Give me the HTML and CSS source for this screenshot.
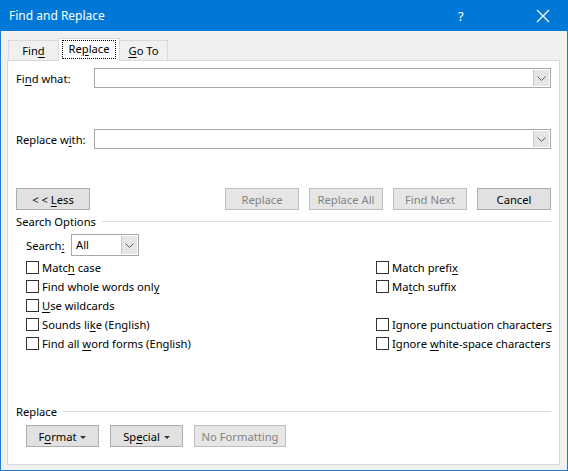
FILE: index.html
```html
<!DOCTYPE html>
<html>
<head>
<meta charset="utf-8">
<link rel="stylesheet" href="styles.css">
</head>
<body>
<div class="window">
  <div class="titlebar">
    <span class="title">Find and Replace</span>
    <span class="help">?</span>
    <span class="close"><svg width="14" height="14" viewBox="0 0 14 14"><path d="M1 1L13 13M13 1L1 13" stroke="#fff" stroke-width="1.2" fill="none"/></svg></span>
  </div>
  <div class="body">
    <div class="tabs">
      <div class="tab t-find"><span>Fin<u>d</u></span></div>
      <div class="tab active"><span class="focus">Re<u>p</u>lace</span></div>
      <div class="tab t-goto"><span><u>G</u>o To</span></div>
    </div>
    <div class="panel">
      <div class="field-row first">
        <label class="flabel">Fi<u>n</u>d what:</label>
        <div class="combo"><span class="drop"><svg width="9" height="5" viewBox="0 0 9 5"><path d="M0.5 0.5L4.5 4.5L8.5 0.5" stroke="#606060" fill="none"/></svg></span></div>
      </div>
      <div class="field-row second">
        <label class="flabel">Replace w<u>i</u>th:</label>
        <div class="combo"><span class="drop"><svg width="9" height="5" viewBox="0 0 9 5"><path d="M0.5 0.5L4.5 4.5L8.5 0.5" stroke="#606060" fill="none"/></svg></span></div>
      </div>
      <div class="btn-row">
        <button class="btn less">&lt; &lt; <u>L</u>ess</button>
        <div class="spacer"></div>
        <button class="btn disabled">Replace</button>
        <button class="btn disabled">Replace All</button>
        <button class="btn disabled">Find Next</button>
        <button class="btn">Cancel</button>
      </div>
      <div class="group-title"><span>Search Options</span><div class="rule"></div></div>
      <div class="search-row">
        <label>Search<u>:</u></label>
        <div class="select"><span class="sel-text">All</span><span class="drop"><svg width="9" height="5" viewBox="0 0 9 5"><path d="M0.5 0.5L4.5 4.5L8.5 0.5" stroke="#606060" fill="none"/></svg></span></div>
      </div>
      <div class="options">
        <div class="opt"><span class="cb"></span><span class="ot">Matc<u>h</u> case</span></div>
        <div class="opt"><span class="cb"></span><span class="ot">Match prefi<u>x</u></span></div>
        <div class="opt"><span class="cb"></span><span class="ot">Find whole words onl<u>y</u></span></div>
        <div class="opt"><span class="cb"></span><span class="ot">Ma<u>t</u>ch suffix</span></div>
        <div class="opt"><span class="cb"></span><span class="ot"><u>U</u>se wildcards</span></div>
        <div class="opt"></div>
        <div class="opt"><span class="cb"></span><span class="ot">Sounds li<u>k</u>e (English)</span></div>
        <div class="opt"><span class="cb"></span><span class="ot">Ignore punctuation character<u>s</u></span></div>
        <div class="opt"><span class="cb"></span><span class="ot">Find all <u>w</u>ord forms (English)</span></div>
        <div class="opt"><span class="cb"></span><span class="ot">Ignore <u>w</u>hite-space characters</span></div>
      </div>
      <div class="group-title replace-title"><span>Replace</span><div class="rule"></div></div>
      <div class="fmt-row">
        <button class="btn fmt">F<u>o</u>rmat <span class="tri"></span></button>
        <button class="btn fmt">Sp<u>e</u>cial <span class="tri"></span></button>
        <button class="btn disabled nofmt">No Formatting</button>
      </div>
    </div>
  </div>
</div>
</body>
</html>
```
FILE: styles.css
```css
* { box-sizing: border-box; }
html, body { margin: 0; padding: 0; }
body {
  width: 568px;
  height: 471px;
  font-family: "Segoe UI", "Noto Sans", "Liberation Sans", sans-serif;
  font-size: 11.2px;
  color: #000;
  overflow: hidden;
  white-space: nowrap;
}
u { text-decoration: underline; text-underline-offset: 2px; }
.window {
  width: 568px;
  height: 471px;
  border: 1px solid #1a7fd4;
  border-top: none;
  display: flex;
  flex-direction: column;
  background: #f0f0f0;
}
.titlebar {
  height: 31px;
  margin: 0 -1px;
  background: #0078d7;
  color: #fff;
  display: flex;
  align-items: center;
  padding-left: 9px;
  font-size: 12px;
}
.title { flex: 1; }
.help { width: 20px; margin-right: 58px; font-size: 13px; }
.close { width: 16px; margin-right: 16px; display: flex; }
.body {
  flex: 1;
  padding: 7px 7px 5px 6px;
  display: flex;
  flex-direction: column;
}
.tabs {
  display: flex;
  height: 22px;
  align-items: flex-end;
  padding-left: 1px;
  position: relative;
  z-index: 1;
}
.tab {
  height: 20px;
  border: 1px solid #d9d9d9;
  border-bottom: none;
  background: #f0f0f0;
  line-height: 19px;
  text-align: center;
  color: #000;
}
.t-find { width: 51px; margin-right: -1px; }
.t-goto { width: 49px; margin-left: -1px; }
.tab.active {
  height: 23px;
  margin-bottom: -1px;
  background: #fff;
  width: 62px;
  padding: 2px 4px 0 4px;
  line-height: 16px;
}
.tab.active .focus {
  display: block;
  outline: 1px dotted #000;
  height: 17px;
}
.panel {
  flex: 1;
  background: #fff;
  border: 1px solid #d9d9d9;
  padding: 0 8px 0 8px;
  display: flex;
  flex-direction: column;
}
.field-row {
  display: flex;
  align-items: center;
  height: 20px;
}
.field-row.first { margin-top: 7px; }
.field-row.second { margin-top: 41px; }
.flabel { width: 78px; }
.combo {
  flex: 1;
  height: 20px;
  border: 1px solid #a8a8a8;
  display: flex;
  justify-content: flex-end;
  padding: 1px;
}
.drop {
  width: 16px;
  background: #e5e5e5;
  border-left: 1px solid #c8c8c8;
  display: flex;
  align-items: center;
  justify-content: center;
}
.btn-row {
  display: flex;
  margin-top: 39px;
  height: 22px;
}
.spacer { flex: 1; }
.btn {
  font: inherit;
  height: 22px;
  width: 74px;
  background: #e1e1e1;
  border: 1px solid #adadad;
  padding: 0;
  margin-left: 10px;
  color: #000;
}
.btn.less { margin-left: 0; }
.btn.disabled {
  color: #838383;
  border-color: #bfbfbf;
  background: #e6e6e6;
}
.group-title {
  display: flex;
  align-items: center;
  margin-top: 2px;
  height: 18px;
}
.group-title .rule {
  flex: 1;
  height: 1px;
  background: #dcdcdc;
  margin-left: 6px;
}
.search-row {
  display: flex;
  align-items: center;
  margin-top: 4px;
  padding-left: 10px;
  height: 22px;
}
.search-row label { width: 45px; }
.select {
  width: 68px;
  height: 22px;
  border: 1px solid #a8a8a8;
  display: flex;
  padding: 1px;
}
.sel-text { flex: 1; padding-left: 3px; line-height: 18px; }
.options {
  display: grid;
  grid-template-columns: 350px auto;
  grid-auto-rows: 19px;
  padding-left: 10px;
  margin-top: 2px;
}
.opt {
  display: flex;
  align-items: center;
}
.cb {
  width: 13px;
  height: 13px;
  border: 1px solid #333;
  background: #fff;
  margin-right: 3px;
  flex: none;
}
.replace-title { margin-top: 49px; }
.fmt-row {
  display: flex;
  margin-top: 5px;
  padding-left: 10px;
}
.btn.fmt { width: 73px; margin-left: 0; margin-right: 11px; }
.btn.nofmt { width: 92px; margin-left: 0; }
.tri {
  display: inline-block;
  width: 0;
  height: 0;
  border-left: 3px solid transparent;
  border-right: 3px solid transparent;
  border-top: 3px solid #333;
  vertical-align: middle;
  margin-left: 1px;
}
```
